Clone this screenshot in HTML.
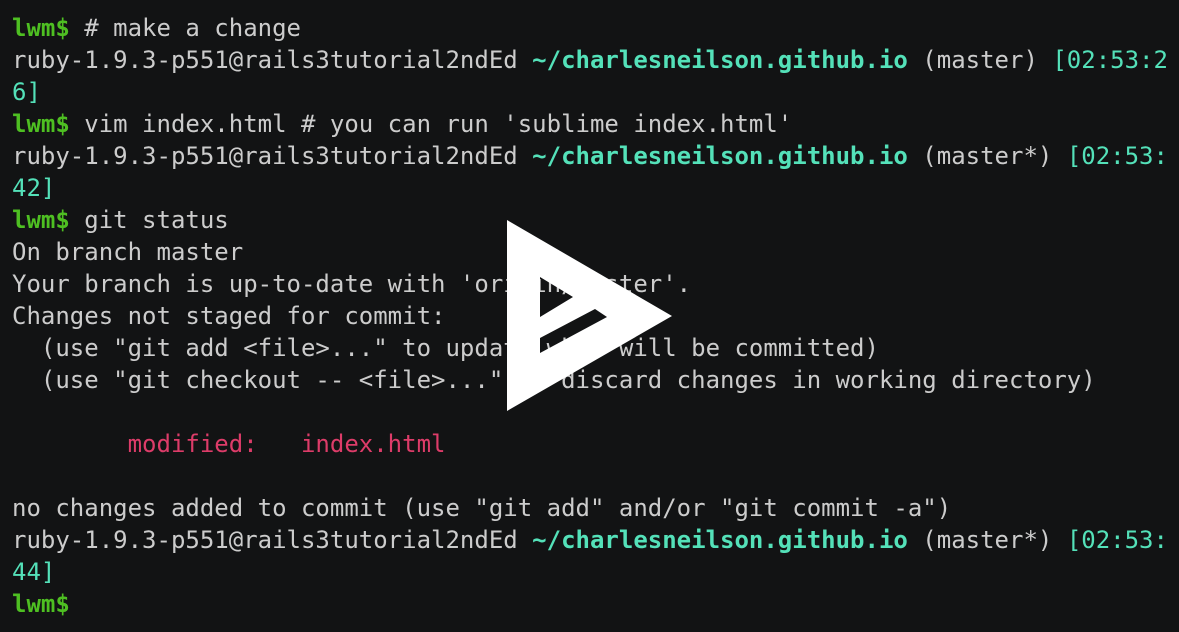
<!DOCTYPE html>
<html><head><meta charset="utf-8"><style>
html,body{margin:0;padding:0;background:#121314;width:1179px;height:632px;overflow:hidden}
pre{margin:0;position:absolute;left:12px;top:12px;font-family:"DejaVu Sans Mono","Liberation Mono",monospace;font-size:24px;line-height:32px;color:#cccccc;white-space:pre}
.g{color:#4ebf22;font-weight:bold}
.c{color:#54e1b9}
.cb{color:#54e1b9;font-weight:bold}
.r{color:#dd3c69}
svg{position:absolute;left:0;top:0}
</style></head><body>
<pre><span class="g">lwm$</span> # make a change
ruby-1.9.3-p551@rails3tutorial2ndEd <span class="cb">~/charlesneilson.github.io</span> (master) <span class="c">[02:53:2
6]</span>
<span class="g">lwm$</span> vim index.html # you can run 'sublime index.html'
ruby-1.9.3-p551@rails3tutorial2ndEd <span class="cb">~/charlesneilson.github.io</span> (master*) <span class="c">[02:53:
42]</span>
<span class="g">lwm$</span> git status
On branch master
Your branch is up-to-date with 'origin/master'.
Changes not staged for commit:
  (use "git add &lt;file&gt;..." to update what will be committed)
  (use "git checkout -- &lt;file&gt;..." to discard changes in working directory)

        <span class="r">modified:   index.html</span>

no changes added to commit (use "git add" and/or "git commit -a")
ruby-1.9.3-p551@rails3tutorial2ndEd <span class="cb">~/charlesneilson.github.io</span> (master*) <span class="c">[02:53:
44]</span>
<span class="g">lwm$</span></pre>
<svg width="1179" height="632"><path fill="#ffffff" fill-rule="evenodd" d="M507 220 L672 316 L507 411 Z M540 277 L540 317 L573 297 Z M540 338 L595 309 L607 317 L540 353 Z"/></svg>
</body></html>
